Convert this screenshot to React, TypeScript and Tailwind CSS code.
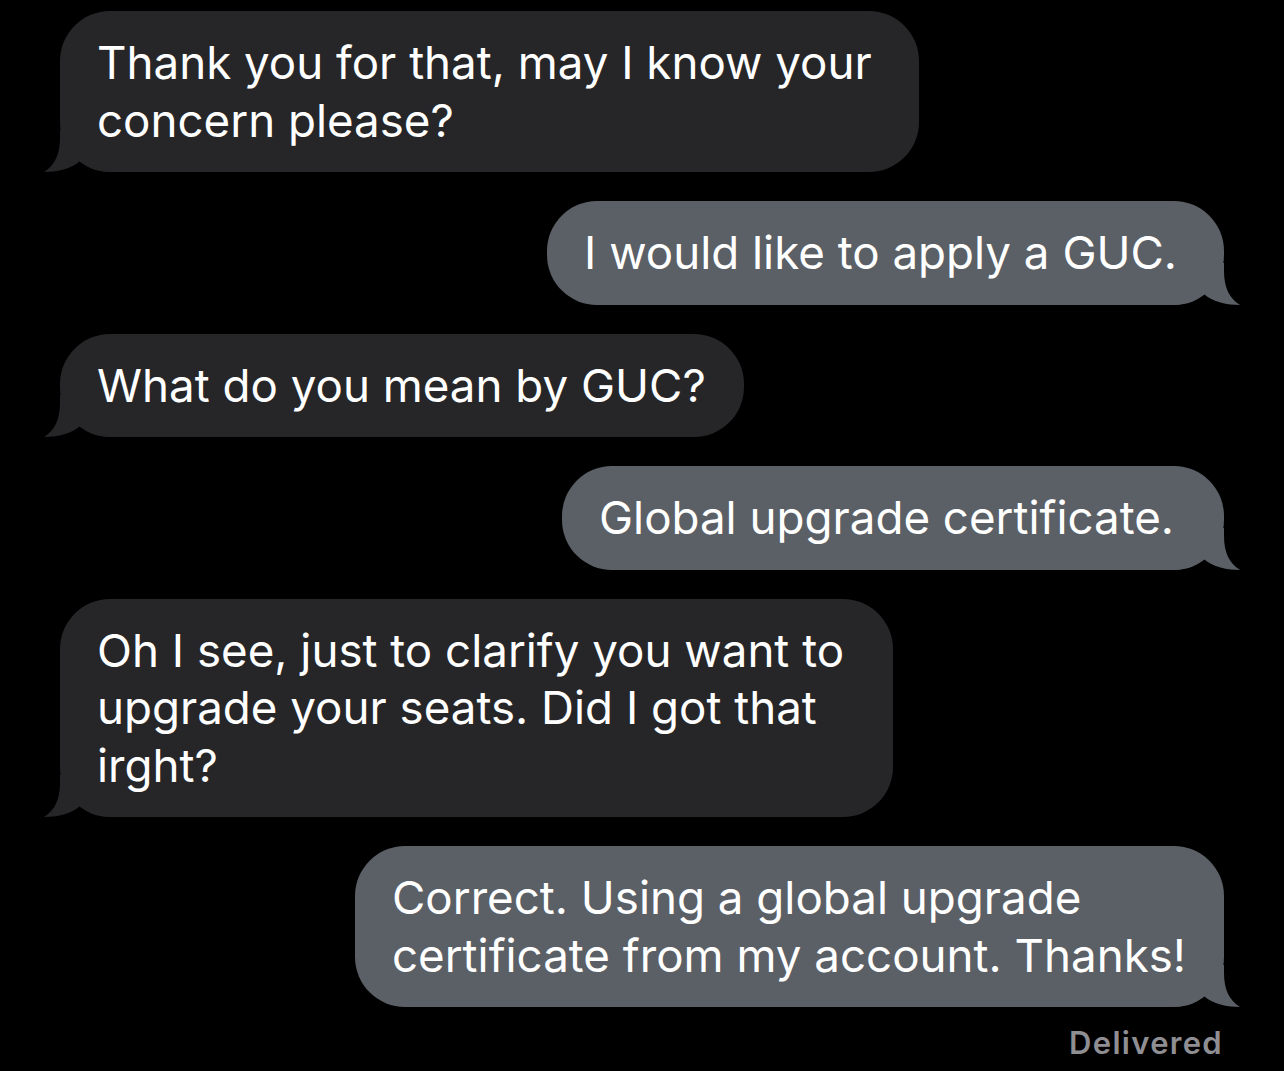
import React from 'react';

type Side = 'in' | 'out';

const Tail: React.FC<{ side: Side }> = ({ side }) => (
  <svg
    width="70"
    height="42"
    viewBox="0 0 70 42"
    className={`absolute bottom-0 ${side === 'in' ? '-left-[16px]' : '-right-[16px] -scale-x-100'}`}
  >
    <path
      d="M16 0 L16 8 C16 24 11 35 0 42 C12 42 28 39 36 31 C44 38 54 42 70 42 L70 0 Z"
      fill={side === 'in' ? '#262628' : '#5b5f66'}
    />
  </svg>
);

const Bubble: React.FC<{ side: Side; lines: string[]; pr: string }> = ({ side, lines, pr }) => (
  <div className={`flex ${side === 'in' ? 'justify-start' : 'justify-end'}`}>
    <div
      className={`relative rounded-[50px] pl-[37px] ${pr} py-[23px] text-[45.7px] leading-[57.5px] text-white whitespace-nowrap ${
        side === 'in' ? 'bg-[#262628]' : 'bg-[#5b5f66]'
      }`}
    >
      <Tail side={side} />
      <div className="relative">
        {lines.map((l, i) => (
          <div key={i}>{l}</div>
        ))}
      </div>
    </div>
  </div>
);

const messages: { side: Side; lines: string[]; pr: string }[] = [
  { side: 'in', pr: 'pr-[47px]', lines: ['Thank you for that, may I know your', 'concern please?'] },
  { side: 'out', pr: 'pr-[47px]', lines: ['I would like to apply a GUC.'] },
  { side: 'in', pr: 'pr-[38px]', lines: ['What do you mean by GUC?'] },
  { side: 'out', pr: 'pr-[50px]', lines: ['Global upgrade certificate.'] },
  { side: 'in', pr: 'pr-[49px]', lines: ['Oh I see, just to clarify you want to', 'upgrade your seats. Did I got that', 'irght?'] },
  { side: 'out', pr: 'pr-[38px]', lines: ['Correct. Using a global upgrade', 'certificate from my account. Thanks!'] },
];

export default function App() {
  return (
    <div
      className="min-h-[1071px] w-[1284px] bg-black px-[60px] pt-[11px] flex flex-col gap-[29px]"
      style={{ fontFamily: 'Inter, "Liberation Sans", sans-serif' }}
    >
      {messages.map((m, i) => (
        <Bubble key={i} side={m.side} lines={m.lines} pr={m.pr} />
      ))}
      <div className="-mt-[16px] flex justify-end pr-[1px] text-[31px] tracking-[1.3px] font-semibold text-[#8e8e93]">
        Delivered
      </div>
    </div>
  );
}
